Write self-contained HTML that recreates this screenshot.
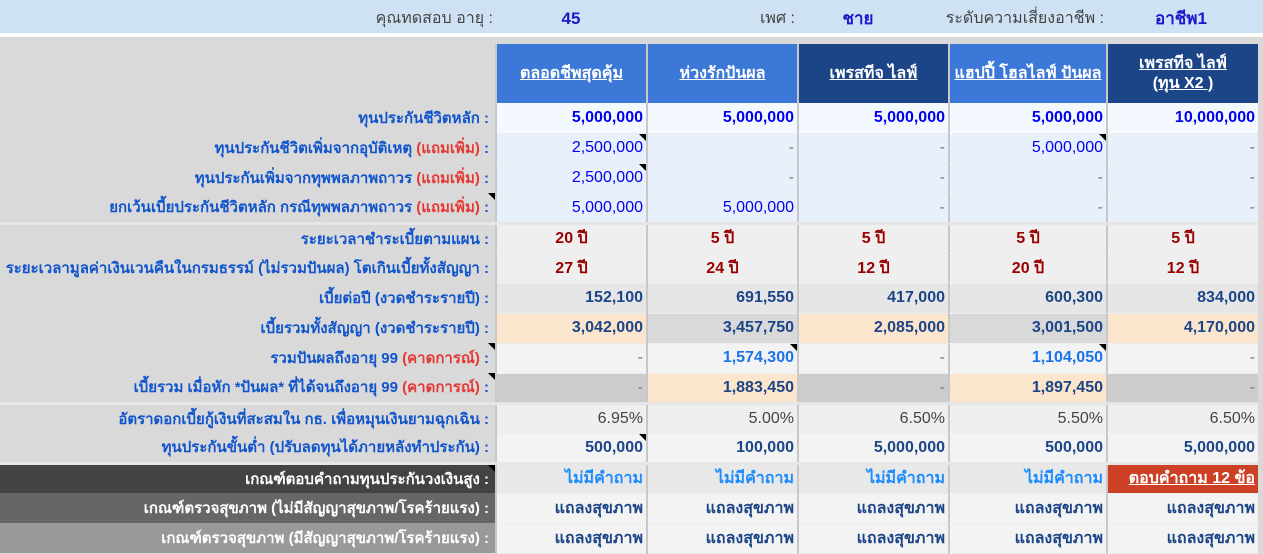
<!DOCTYPE html>
<html><head><meta charset="utf-8"><style>
*{margin:0;padding:0;box-sizing:border-box}
body{width:1263px;height:553px;overflow:hidden;background:#d9d9d9;font-family:"Liberation Sans",sans-serif;font-size:15px;position:relative}
.top{position:absolute;left:0;top:0;width:1263px;height:37px;background:#cfe2f3;border-bottom:4px solid #fff}
.top span{position:absolute;top:2px;line-height:33px;height:33px;font-size:16px}
.lb{color:#444}
.vb{color:#1a1acc;font-weight:bold;transform:translateX(-50%);font-size:17px!important}
table{position:absolute;left:0;top:44px;border-collapse:collapse;table-layout:fixed}
td{height:30px;padding:0 3px;white-space:nowrap;overflow:hidden;text-align:right;position:relative;border-bottom:1px dotted #fff;font-size:16px}
td.l{color:#1155cc;font-weight:bold;padding-right:6px;background:#d9d9d9;border-bottom:none;font-size:15px}
td.c{border-left:2px solid #c8c8c8}
.r{color:#e53935}
th{height:59px;color:#fff;font-weight:bold;text-decoration:underline;font-size:16px;border-left:2px solid #c8c8c8;line-height:20px}
.h1{background:#3c78d8}.h2{background:#1c4587}
.b1 td.c{background:#f3f9ff;color:#0000ee;font-weight:bold}
.b2 td.c{background:#e8f0fb;color:#0000ee}
.yr td.c{background:#efefef;color:#990000;font-weight:bold;text-align:center}
.nv td.c{color:#1c4587;font-weight:bold}
.pk{background:#fce5cd!important}
.g9 td.c{background:#f3f3f3}
.g6{background:#d9d9d9!important}.g7{background:#cccccc!important}
.bl td.c{color:#1a73e8;font-weight:bold}
.d{color:#777!important;font-weight:normal!important}
.pc td.c{background:#efefef;color:#444}
.mn td.c{background:#f3f3f3;color:#1c4587;font-weight:bold}
.q td.c{background:#e8e8e8;color:#1a8cff;font-weight:bold}
.s td.c{background:#f3f3f3;color:#1c4587;font-weight:bold}
.sep td{border-top:3px solid #e6e6e6}
.tri::after{content:"";position:absolute;right:0;top:0;border-top:7px solid #000;border-left:7px solid transparent}
</style></head><body>
<div class="top">
<span class="lb" style="right:770px">คุณทดสอบ อายุ :</span>
<span class="vb" style="left:571px">45</span>
<span class="lb" style="right:468px">เพศ :</span>
<span class="vb" style="left:858px">ชาย</span>
<span class="lb" style="right:159px">ระดับความเสี่ยงอาชีพ :</span>
<span class="vb" style="left:1181px">อาชีพ1</span>
</div>
<table>
<colgroup><col style="width:496px"><col style="width:151px"><col style="width:151px"><col style="width:151px"><col style="width:158px"><col style="width:151px"></colgroup>
<tr><th style="background:#d9d9d9;border:none;text-decoration:none"></th><th class="h1">ตลอดชีพสุดคุ้ม</th><th class="h1">ห่วงรักปันผล</th><th class="h2">เพรสทีจ ไลฟ์</th><th class="h1">แฮปปี้ โฮลไลฟ์ ปันผล</th><th class="h2">เพรสทีจ ไลฟ์<br>(ทุน X2 )</th></tr>
<tr class="b1"><td class="l">ทุนประกันชีวิตหลัก :</td><td class="c">5,000,000</td><td class="c">5,000,000</td><td class="c">5,000,000</td><td class="c">5,000,000</td><td class="c">10,000,000</td></tr>
<tr class="b2"><td class="l">ทุนประกันชีวิตเพิ่มจากอุบัติเหตุ <span class="r">(แถมเพิ่ม)</span> :</td><td class="c tri">2,500,000</td><td class="c d">-</td><td class="c d">-</td><td class="c tri">5,000,000</td><td class="c d">-</td></tr>
<tr class="b2"><td class="l">ทุนประกันเพิ่มจากทุพพลภาพถาวร <span class="r">(แถมเพิ่ม)</span> :</td><td class="c tri">2,500,000</td><td class="c d">-</td><td class="c d">-</td><td class="c d">-</td><td class="c d">-</td></tr>
<tr class="b2"><td class="l tri">ยกเว้นเบี้ยประกันชีวิตหลัก กรณีทุพพลภาพถาวร <span class="r">(แถมเพิ่ม)</span> :</td><td class="c">5,000,000</td><td class="c">5,000,000</td><td class="c d">-</td><td class="c d">-</td><td class="c d">-</td></tr>
<tr class="yr sep"><td class="l">ระยะเวลาชำระเบี้ยตามแผน :</td><td class="c">20 ปี</td><td class="c">5 ปี</td><td class="c">5 ปี</td><td class="c">5 ปี</td><td class="c">5 ปี</td></tr>
<tr class="yr"><td class="l">ระยะเวลามูลค่าเงินเวนคืนในกรมธรรม์ (ไม่รวมปันผล) โตเกินเบี้ยทั้งสัญญา :</td><td class="c">27 ปี</td><td class="c">24 ปี</td><td class="c">12 ปี</td><td class="c">20 ปี</td><td class="c">12 ปี</td></tr>
<tr class="nv"><td class="l">เบี้ยต่อปี (งวดชำระรายปี) :</td><td class="c" style="background:#e6e6e6">152,100</td><td class="c" style="background:#e6e6e6">691,550</td><td class="c" style="background:#e6e6e6">417,000</td><td class="c" style="background:#e6e6e6">600,300</td><td class="c" style="background:#e6e6e6">834,000</td></tr>
<tr class="nv"><td class="l">เบี้ยรวมทั้งสัญญา (งวดชำระรายปี) :</td><td class="c pk">3,042,000</td><td class="c g6">3,457,750</td><td class="c pk">2,085,000</td><td class="c g6">3,001,500</td><td class="c pk">4,170,000</td></tr>
<tr class="g9 bl"><td class="l tri">รวมปันผลถึงอายุ 99 <span class="r">(คาดการณ์)</span> :</td><td class="c d">-</td><td class="c tri">1,574,300</td><td class="c d">-</td><td class="c tri">1,104,050</td><td class="c d">-</td></tr>
<tr class="nv"><td class="l tri">เบี้ยรวม เมื่อหัก *ปันผล* ที่ได้จนถึงอายุ 99 <span class="r">(คาดการณ์)</span> :</td><td class="c g7 d">-</td><td class="c pk">1,883,450</td><td class="c g7 d">-</td><td class="c pk">1,897,450</td><td class="c g7 d">-</td></tr>
<tr class="pc sep"><td class="l">อัตราดอกเบี้ยกู้เงินที่สะสมใน กธ. เพื่อหมุนเงินยามฉุกเฉิน :</td><td class="c">6.95%</td><td class="c">5.00%</td><td class="c">6.50%</td><td class="c">5.50%</td><td class="c">6.50%</td></tr>
<tr class="mn"><td class="l">ทุนประกันขั้นต่ำ (ปรับลดทุนได้ภายหลังทำประกัน) :</td><td class="c tri">500,000</td><td class="c">100,000</td><td class="c">5,000,000</td><td class="c">500,000</td><td class="c">5,000,000</td></tr>
<tr class="q sep"><td class="l tri" style="background:#434343;color:#fff">เกณฑ์ตอบคำถามทุนประกันวงเงินสูง :</td><td class="c">ไม่มีคำถาม</td><td class="c">ไม่มีคำถาม</td><td class="c">ไม่มีคำถาม</td><td class="c">ไม่มีคำถาม</td><td class="c" style="background:#cc4125;color:#fff;text-decoration:underline">ตอบคำถาม 12 ข้อ</td></tr>
<tr class="s"><td class="l" style="background:#666;color:#fff">เกณฑ์ตรวจสุขภาพ (ไม่มีสัญญาสุขภาพ/โรคร้ายแรง) :</td><td class="c">แถลงสุขภาพ</td><td class="c">แถลงสุขภาพ</td><td class="c">แถลงสุขภาพ</td><td class="c">แถลงสุขภาพ</td><td class="c">แถลงสุขภาพ</td></tr>
<tr class="s"><td class="l" style="background:#999;color:#fff">เกณฑ์ตรวจสุขภาพ (มีสัญญาสุขภาพ/โรคร้ายแรง) :</td><td class="c">แถลงสุขภาพ</td><td class="c">แถลงสุขภาพ</td><td class="c">แถลงสุขภาพ</td><td class="c">แถลงสุขภาพ</td><td class="c">แถลงสุขภาพ</td></tr>
</table>
</body></html>
